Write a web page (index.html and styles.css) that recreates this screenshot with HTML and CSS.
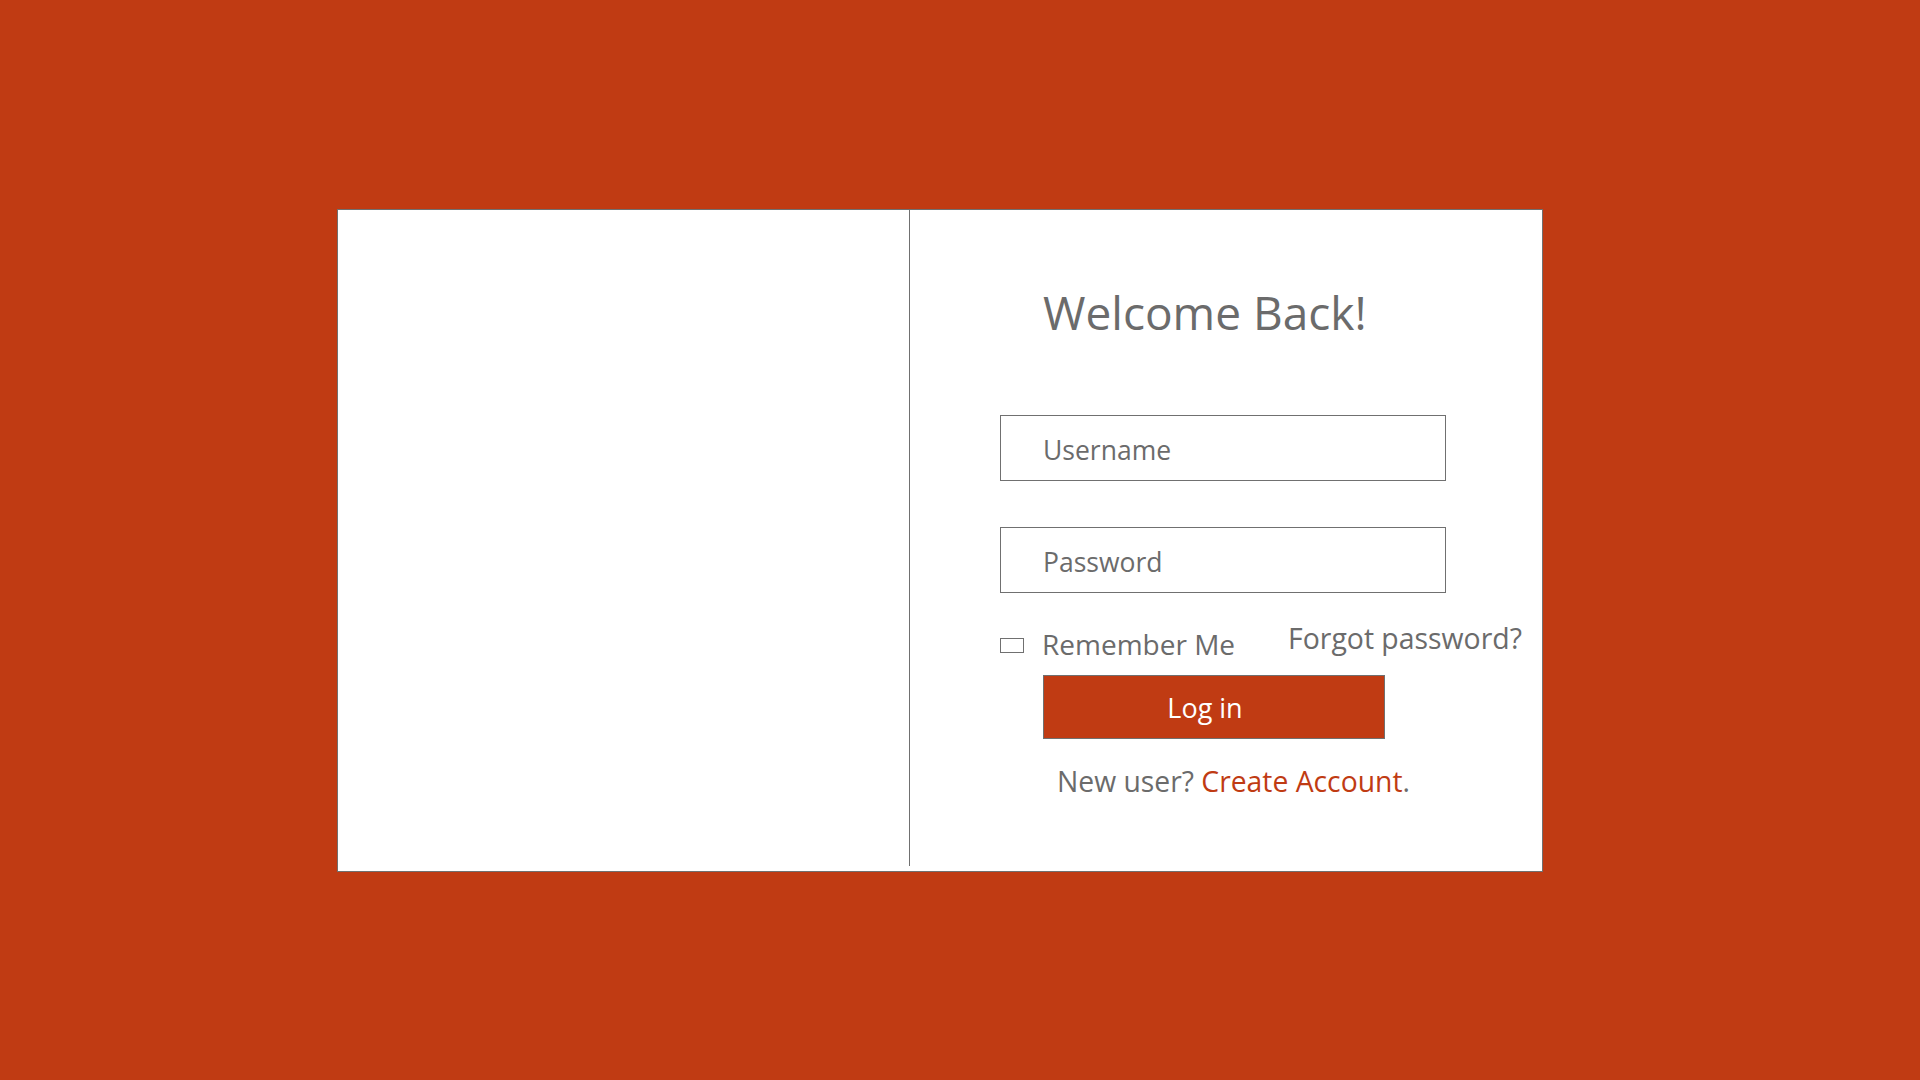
FILE: index.html
```html
<!DOCTYPE html>
<html lang="en">
<head>
<meta charset="utf-8">
<title>Log in</title>
<link rel="stylesheet" href="styles.css">
</head>
<body>
<main class="stage">
  <section class="card">
    <div class="card-left"></div>
    <div class="divider"></div>
    <form class="card-right">
      <h1 class="title">Welcome Back!</h1>
      <input class="field" type="text" placeholder="Username">
      <input class="field field-pass" type="password" placeholder="Password">
      <div class="options">
        <label class="remember">
          <span class="check"></span>
          <span class="remember-text">Remember Me</span>
        </label>
        <a class="forgot" href="#">Forgot password?</a>
      </div>
      <button class="login" type="button">Log in</button>
      <p class="signup">New user? <a class="signup-link" href="#">Create Account</a>.</p>
    </form>
  </section>
</main>
</body>
</html>
```

FILE: styles.css
```css
* { box-sizing: border-box; }

html, body {
  margin: 0;
  padding: 0;
}

body {
  width: 1920px;
  height: 1080px;
  background: #c03b13;
  font-family: "Open Sans", "Noto Sans", sans-serif;
  color: #6b6b6b;
  overflow: hidden;
}

.stage {
  padding: 209px 0 0 337px;
}

.card {
  display: flex;
  width: 1206px;
  height: 663px;
  background: #ffffff;
  border: 1px solid #707070;
}

.card-left {
  width: 571px;
  flex: none;
}

.divider {
  width: 1px;
  height: 656px;
  background: #707070;
  flex: none;
}

.card-right {
  flex: 1;
  display: flex;
  flex-direction: column;
  align-items: flex-start;
  padding: 79px 0 0 90px;
}

.title {
  margin: 0 0 0 43px;
  font-size: 46px;
  line-height: 46px;
  font-weight: 400;
  color: #6b6b6b;
  white-space: nowrap;
}

.field {
  display: block;
  width: 446px;
  height: 66px;
  margin: 80px 0 0 0;
  padding: 4px 0 0 42px;
  border: 1px solid #707070;
  border-radius: 0;
  background: #ffffff;
  font-family: inherit;
  font-size: 26.5px;
  color: #6b6b6b;
  outline: none;
}

.field-pass {
  margin-top: 46px;
}

.field::placeholder {
  color: #6b6b6b;
  opacity: 1;
}

.options {
  display: flex;
  align-items: flex-start;
  margin-top: 31px;
}

.remember {
  display: flex;
  align-items: flex-start;
}

.check {
  display: block;
  width: 24px;
  height: 15px;
  margin-top: 14px;
  border: 1px solid #707070;
}

.remember-text {
  margin: 6px 0 0 18px;
  font-size: 28px;
  line-height: 28px;
  white-space: nowrap;
}

.forgot {
  margin-left: 53px;
  font-size: 28.4px;
  line-height: 28px;
  color: #6b6b6b;
  text-decoration: none;
  white-space: nowrap;
}

.login {
  display: flex;
  align-items: center;
  justify-content: center;
  width: 342px;
  height: 64px;
  margin: 17px 0 0 43px;
  padding: 0 18px 0 0;
  background: #c03b13;
  border: 1px solid #707070;
  border-radius: 0;
  color: #ffffff;
  font-family: inherit;
  font-size: 27px;
  line-height: 27px;
}

.signup {
  margin: 28px 0 0 57px;
  font-size: 28.3px;
  line-height: 28px;
  white-space: nowrap;
}

.signup-link {
  color: #c03b13;
  text-decoration: none;
}
```
